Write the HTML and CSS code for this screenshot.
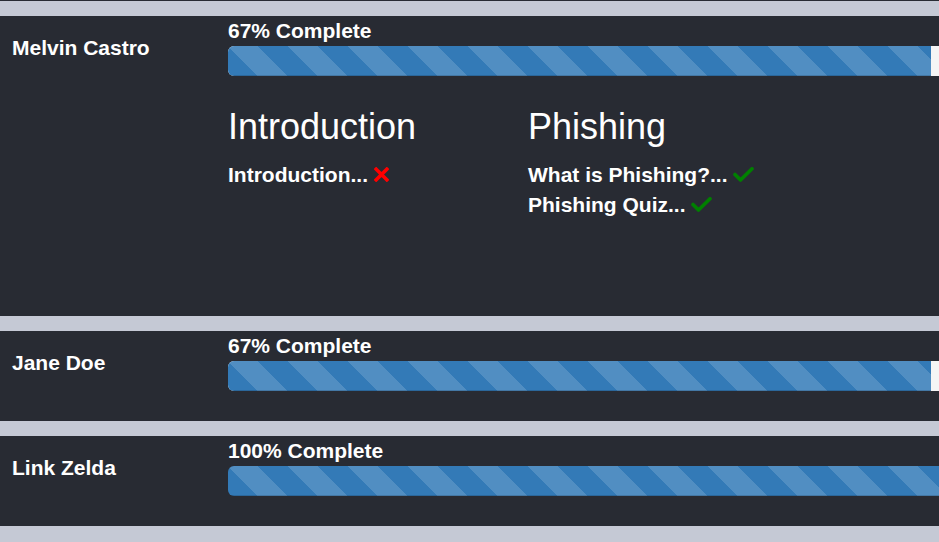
FILE: index.html
```html
<!DOCTYPE html>
<html>
<head>
<meta charset="utf-8">
<link rel="stylesheet" href="styles.css">
</head>
<body>
<div class="board">
  <section class="user user-open">
    <div class="name">Melvin Castro</div>
    <div class="detail">
      <div class="label">67% Complete</div>
      <div class="progress"><div class="bar" style="width:67%"></div></div>
      <div class="modules">
        <div class="module">
          <h2 class="module-title">Introduction</h2>
          <ul class="lessons">
            <li>Introduction... <svg class="icon icon-x" width="15" height="15" viewBox="0 0 15 15"><path d="M2.2 2.2 L12.8 12.8 M12.8 2.2 L2.2 12.8" stroke="#ff0000" stroke-width="3.6" stroke-linecap="square" fill="none"/></svg></li>
          </ul>
        </div>
        <div class="module">
          <h2 class="module-title">Phishing</h2>
          <ul class="lessons">
            <li>What is Phishing?... <svg class="icon icon-ok" width="21" height="15" viewBox="0 0 21 15"><path d="M2 7.5 L7.5 13 L19 1.8" stroke="#008000" stroke-width="3.6" stroke-linecap="round" stroke-linejoin="round" fill="none"/></svg></li>
            <li>Phishing Quiz... <svg class="icon icon-ok" width="21" height="15" viewBox="0 0 21 15"><path d="M2 7.5 L7.5 13 L19 1.8" stroke="#008000" stroke-width="3.6" stroke-linecap="round" stroke-linejoin="round" fill="none"/></svg></li>
          </ul>
        </div>
      </div>
    </div>
  </section>
  <section class="user">
    <div class="name">Jane Doe</div>
    <div class="detail">
      <div class="label">67% Complete</div>
      <div class="progress"><div class="bar" style="width:67%"></div></div>
    </div>
  </section>
  <section class="user">
    <div class="name">Link Zelda</div>
    <div class="detail">
      <div class="label">100% Complete</div>
      <div class="progress"><div class="bar" style="width:100%"></div></div>
    </div>
  </section>
</div>
</body>
</html>
```
FILE: styles.css
```css
html, body {
  margin: 0;
  padding: 0;
  overflow: hidden;
  background: #c5c9d5;
}

body {
  font-family: "Liberation Sans", Arial, sans-serif;
  color: #ffffff;
}

.board {
  border-top: 1px solid #282b33;
  padding: 15px 0;
  display: flex;
  flex-direction: column;
  gap: 15px;
}

.user {
  background: #282b33;
  display: flex;
  padding-bottom: 30px;
  min-width: 1300px;
}

.user-open {
  padding-bottom: 96px;
}

.name {
  width: 228px;
  box-sizing: border-box;
  padding: 17px 0 0 12px;
  font-weight: bold;
  font-size: 21px;
  line-height: 30px;
  flex: none;
}

.detail {
  flex: none;
  width: 1049px;
}

.label {
  font-weight: bold;
  font-size: 21px;
  line-height: 30px;
}

.progress {
  height: 30px;
  background: #f5f5f5;
  border-radius: 6px;
  overflow: hidden;
}

.bar {
  height: 100%;
  background-color: #337ab7;
  background-image: linear-gradient(45deg, rgba(255,255,255,.15) 25%, transparent 25%, transparent 50%, rgba(255,255,255,.15) 50%, rgba(255,255,255,.15) 75%, transparent 75%, transparent);
  background-size: 60px 60px;
  box-shadow: inset 0 -1px 0 rgba(0,0,0,.15);
}

.modules {
  display: flex;
  margin-top: 31px;
}

.module {
  width: 300px;
}

.module-title {
  margin: 0;
  font-weight: normal;
  font-size: 36px;
  line-height: 40px;
}

.lessons {
  list-style: none;
  margin: 13px 0 0;
  padding: 0;
  font-weight: bold;
  font-size: 21px;
  line-height: 30px;
}

.icon {
  vertical-align: baseline;
}
```
